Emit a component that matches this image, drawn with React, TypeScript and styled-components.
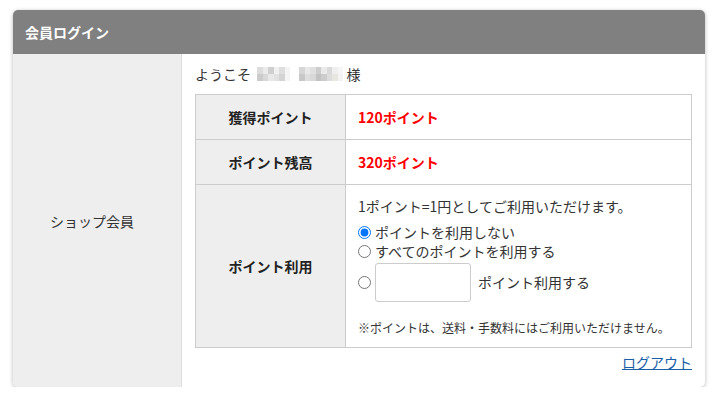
import React from "react";
import styled, { createGlobalStyle } from "styled-components";

const Global = createGlobalStyle`
  html, body { margin: 0; padding: 0; background: #fff; }
  body {
    font-family: "Noto Sans CJK JP", "Noto Sans", sans-serif;
    color: #333;
    font-size: 14px;
  }
`;

const Page = styled.div`
  padding: 10px 10px 0 13px;
`;

const Card = styled.section`
  display: flex;
  flex-direction: column;
  background: #fff;
  border-radius: 5px;
  box-shadow: 0 1px 4px rgba(0, 0, 0, 0.28);
  overflow: hidden;
`;

const Header = styled.h2`
  margin: 0;
  height: 44px;
  display: flex;
  align-items: center;
  padding-left: 12px;
  background: #808080;
  color: #fff;
  font-size: 14px;
  font-weight: 700;
`;

const Body = styled.div`
  display: flex;
`;

const Side = styled.div`
  width: 169px;
  flex: none;
  box-sizing: border-box;
  padding-right: 10px;
  background: #eee;
  border-right: 1px solid #ddd;
  display: flex;
  align-items: center;
  justify-content: center;
  font-size: 14px;
  color: #333;
`;

const Main = styled.div`
  flex: 1;
  padding: 12px 13px 17px 13px;
  display: flex;
  flex-direction: column;
`;

const Welcome = styled.div`
  display: flex;
  align-items: center;
  height: 16px;
  line-height: 16px;
  margin-bottom: 12px;
`;

const Mosaic = styled.span<{ $cols: number }>`
  display: inline-grid;
  grid-template-columns: repeat(${(p) => p.$cols}, 5.5px);
  grid-auto-rows: 7px;
`;

const Cell = styled.span<{ $c: string }>`
  background: ${(p) => p.$c};
`;

const Table = styled.div`
  display: grid;
  grid-template-columns: 150px 1fr;
  border-top: 1px solid #ccc;
  border-left: 1px solid #ccc;
`;

const Label = styled.div<{ $h: number }>`
  height: ${(p) => p.$h}px;
  box-sizing: border-box;
  background: #eee;
  border-right: 1px solid #ccc;
  border-bottom: 1px solid #ccc;
  display: flex;
  align-items: center;
  justify-content: center;
  font-weight: 700;
  color: #222;
`;

const Value = styled.div<{ $h: number }>`
  height: ${(p) => p.$h}px;
  box-sizing: border-box;
  border-right: 1px solid #ccc;
  border-bottom: 1px solid #ccc;
  padding: 0 12px;
  display: flex;
  align-items: center;
`;

const Points = styled.span`
  color: #ff0000;
  font-weight: 700;
`;

const UseCell = styled.div`
  box-sizing: border-box;
  height: 163px;
  border-right: 1px solid #ccc;
  border-bottom: 1px solid #ccc;
  padding: 11px 12px 0;
  display: flex;
  flex-direction: column;
  & > * { flex: none; }
`;

const Desc = styled.div`
  line-height: 20px;
  margin-bottom: 7px;
`;

const RadioRow = styled.label<{ $tall?: boolean }>`
  display: flex;
  align-items: center;
  height: ${(p) => (p.$tall ? "39px" : "19px")};
  margin-top: ${(p) => (p.$tall ? "2px" : "0")};
  line-height: 19px;
`;

const Radio = styled.input`
  width: 13px;
  height: 13px;
  margin: 0 4px 0 0;
  accent-color: #0075ff;
`;

const NumInput = styled.input`
  box-sizing: border-box;
  width: 96px;
  height: 39px;
  border: 1px solid #ccc;
  border-radius: 3px;
  margin: 0 7px 0 0;
  padding: 0 6px;
  font: inherit;
`;

const Note = styled.div`
  margin-top: 16px;
  font-size: 12px;
  line-height: 20px;
  color: #333;
`;

const Footer = styled.div`
  display: flex;
  justify-content: flex-end;
  margin-top: 6px;
  line-height: 16px;
`;

const Link = styled.a`
  color: #1a5ea8;
  text-decoration: underline;
  font-size: 14px;
`;

const g1 = ["#dcdcdc", "#ebebeb", "#cfcfcf", "#f0f0f0", "#dedede", "#f4f4f4", "#cbcbcb", "#d8d8d8", "#e8e8e8", "#e2e2e2", "#d4d4d4", "#f5f5f5"];
const g2 = ["#d6d6d6", "#e8e8e8", "#e0e0e0", "#cdcdcd", "#eaeaea", "#dadada", "#efefef", "#f6f6f6", "#c8c8c8", "#dedede", "#d8d8d8", "#c2c2c2", "#cccccc", "#dddddd", "#e8e7df", "#f3f3f3"];

export default function App() {
  return (
    <>
      <Global />
      <Page>
        <Card>
          <Header>会員ログイン</Header>
          <Body>
            <Side>ショップ会員</Side>
            <Main>
              <Welcome>
                ようこそ&nbsp;&nbsp;
                <Mosaic $cols={6}>
                  {g1.map((c, i) => (
                    <Cell key={i} $c={c} />
                  ))}
                </Mosaic>
                <Mosaic $cols={8} style={{ marginLeft: 9 }}>
                  {g2.map((c, i) => (
                    <Cell key={i} $c={c} />
                  ))}
                </Mosaic>
                &nbsp;様
              </Welcome>
              <Table>
                <Label $h={45}>獲得ポイント</Label>
                <Value $h={45}>
                  <Points>120ポイント</Points>
                </Value>
                <Label $h={45}>ポイント残高</Label>
                <Value $h={45}>
                  <Points>320ポイント</Points>
                </Value>
                <Label $h={163}>ポイント利用</Label>
                <UseCell>
                  <Desc>1ポイント=1円としてご利用いただけます。</Desc>
                  <RadioRow>
                    <Radio type="radio" name="use" defaultChecked />
                    ポイントを利用しない
                  </RadioRow>
                  <RadioRow>
                    <Radio type="radio" name="use" />
                    すべてのポイントを利用する
                  </RadioRow>
                  <RadioRow $tall>
                    <Radio type="radio" name="use" />
                    <NumInput type="text" />
                    ポイント利用する
                  </RadioRow>
                  <Note>※ポイントは、送料・手数料にはご利用いただけません。</Note>
                </UseCell>
              </Table>
              <Footer>
                <Link href="#">ログアウト</Link>
              </Footer>
            </Main>
          </Body>
        </Card>
      </Page>
    </>
  );
}
